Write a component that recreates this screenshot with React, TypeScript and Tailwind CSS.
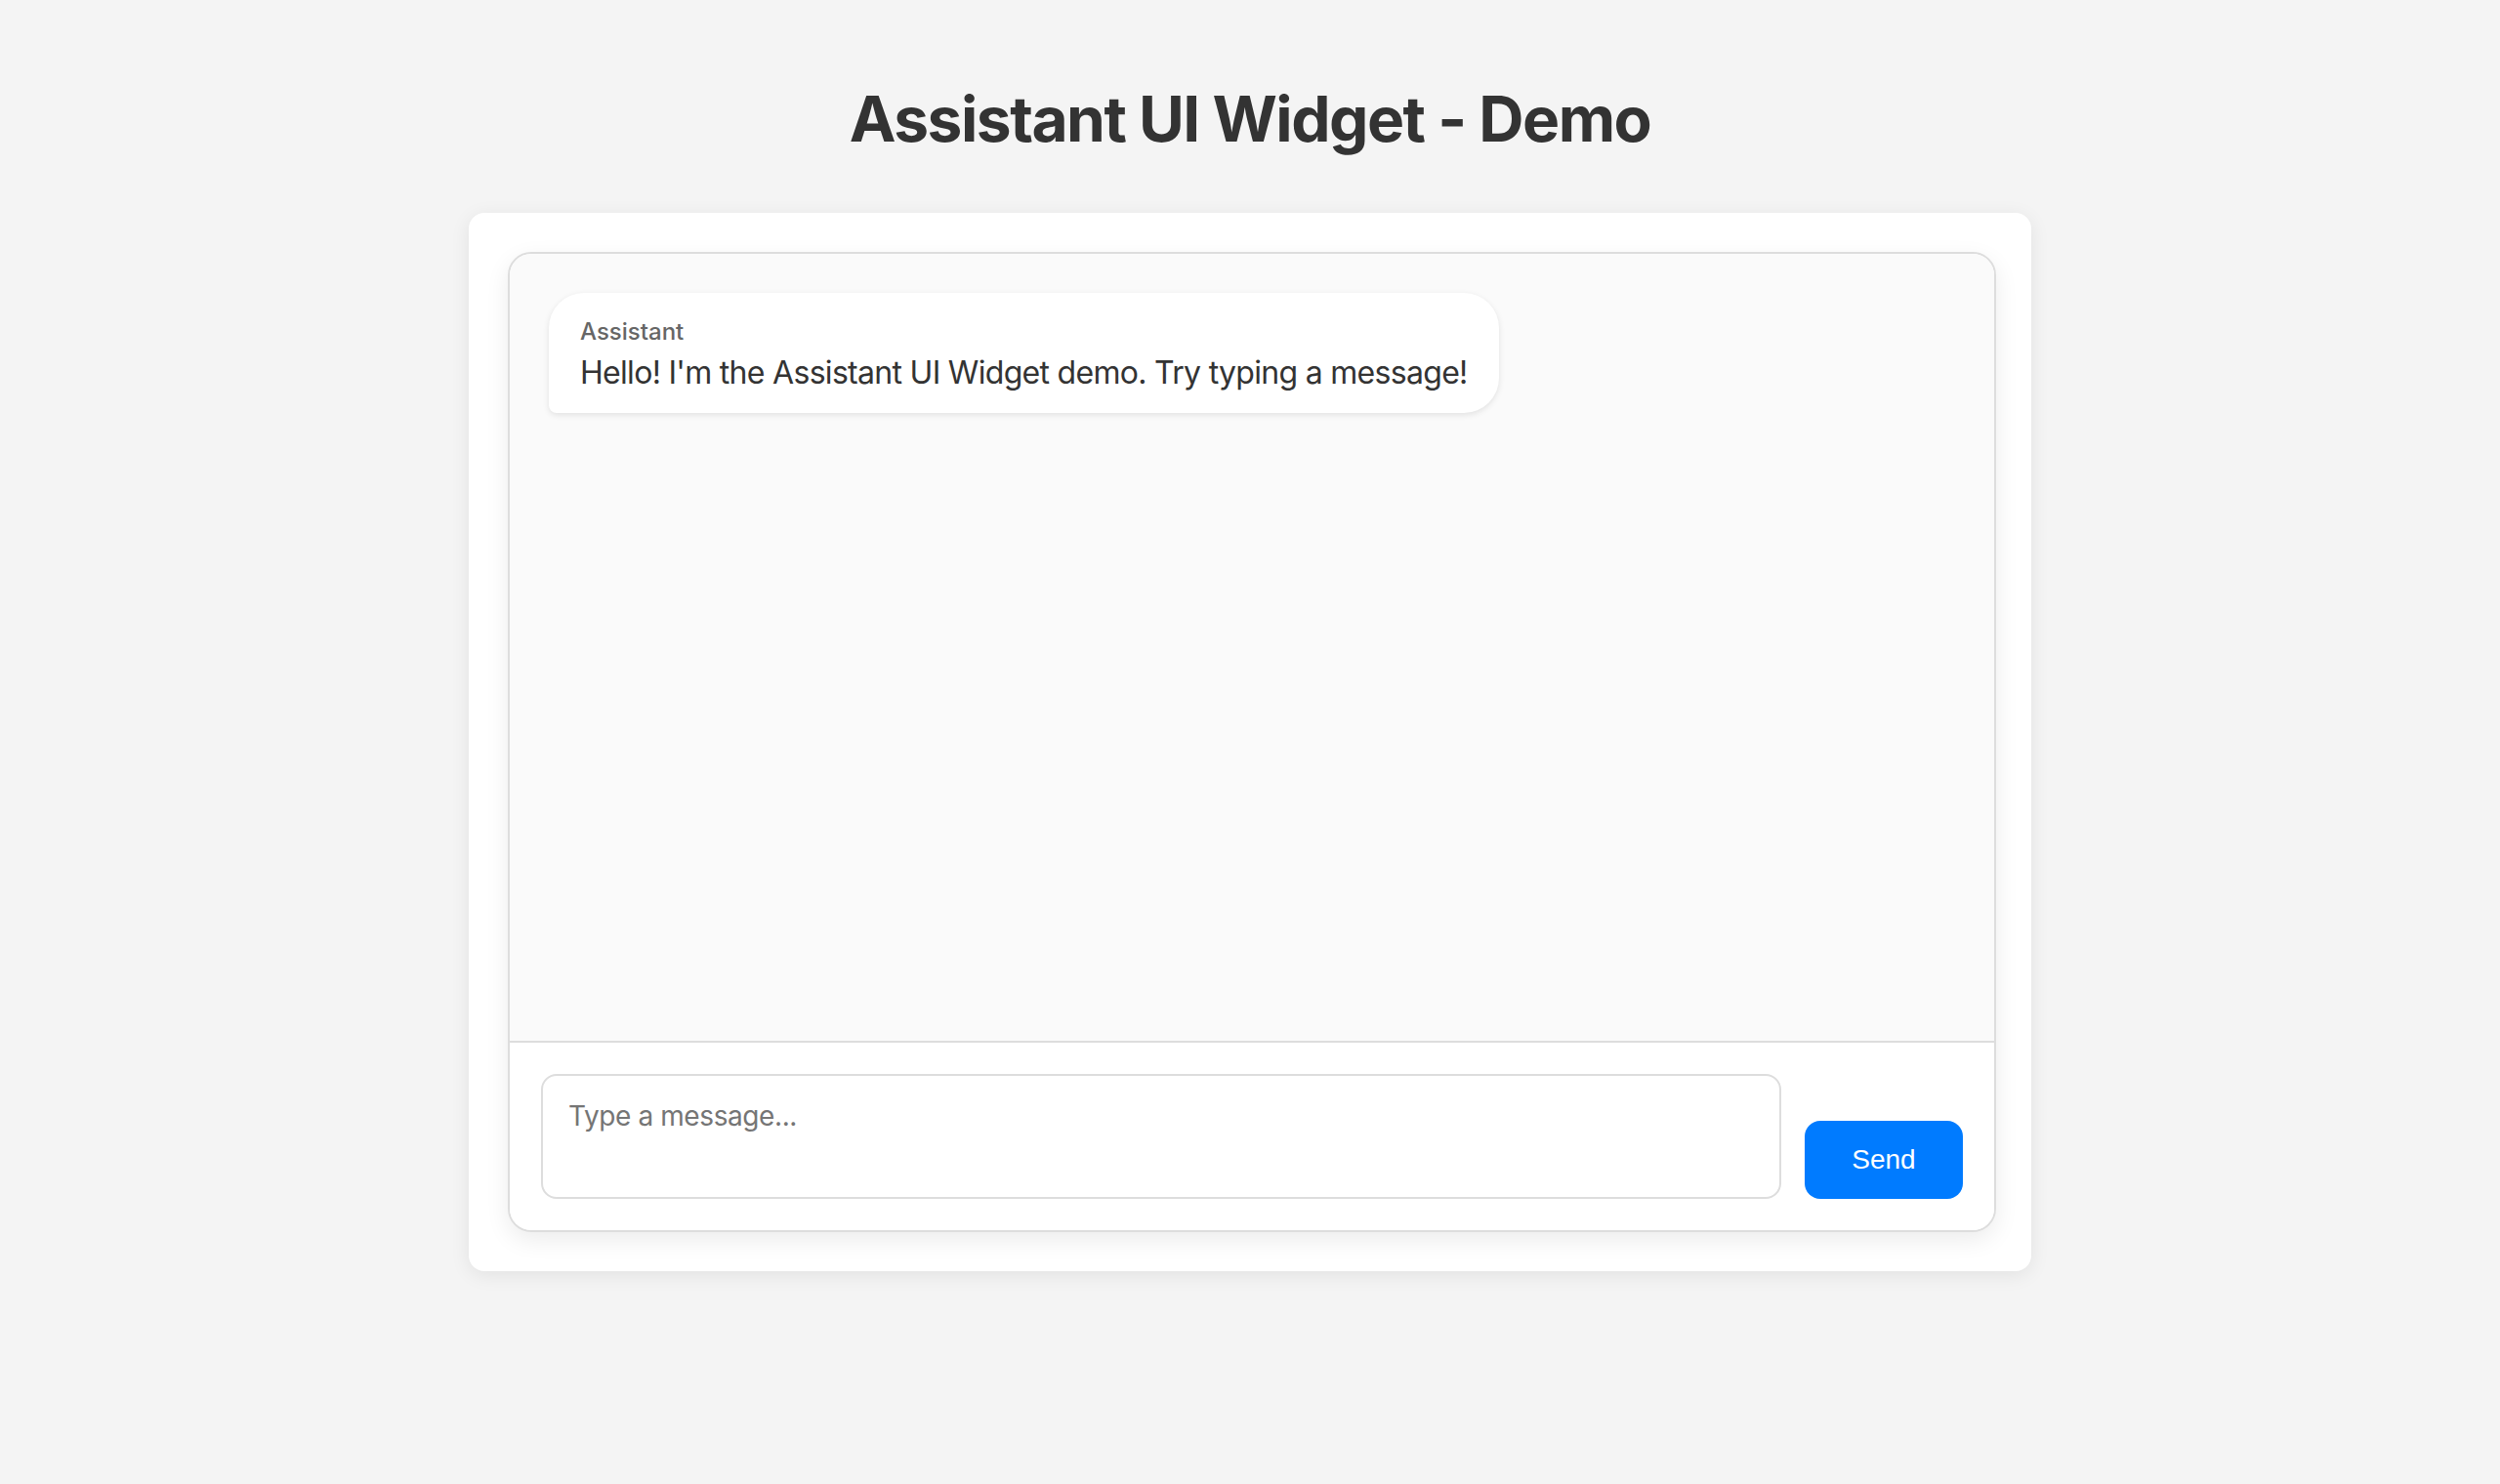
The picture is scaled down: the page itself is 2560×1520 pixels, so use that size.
export default function App() {
  return (
    <div className="min-h-[1520px] w-full bg-[#f4f4f4] pt-[83px] font-['Inter',sans-serif] text-[#333]">
      <h1 className="text-center text-[64px] font-bold leading-[77px] tracking-[-1.5px] text-[#333]">
        Assistant UI Widget - Demo
      </h1>

      {/* Demo card */}
      <div className="mx-auto mt-[58px] w-[1600px] rounded-[16px] bg-white p-[40px] shadow-[0_4px_20px_rgba(0,0,0,0.08)]">
        {/* Widget */}
        <div className="flex h-[1004px] w-[1524px] flex-col overflow-hidden rounded-[24px] border-2 border-[#ddd] bg-white shadow-[0_8px_24px_rgba(0,0,0,0.08)]">
          <div className="flex flex-1 flex-col items-start bg-[#fafafa] p-[40px]">
            <div className="rounded-[36px] rounded-bl-[8px] bg-white px-[32px] pb-[22px] pt-[26px] shadow-[0_2px_6px_rgba(0,0,0,0.1)]">
              <div className="mb-[8px] text-[24px] font-medium leading-[28px] text-[#666]">Assistant</div>
              <div className="text-[32px] leading-[39px] tracking-[-0.7px] text-[#333]">
                Hello! I'm the Assistant UI Widget demo. Try typing a message!
              </div>
            </div>
          </div>

          <div className="flex items-end gap-[24px] border-t-2 border-[#ddd] bg-white p-[32px]">
            <textarea
              placeholder="Type a message..."
              className="h-[128px] flex-1 resize-none rounded-[16px] border-2 border-[#ddd] bg-white px-[26px] pb-[20px] pt-[24px] font-['Inter',sans-serif] text-[28px] leading-[34px] tracking-[-0.4px] text-[#333] outline-none placeholder:text-[#757575]"
            />
            <button className="h-[80px] w-[162px] rounded-[16px] bg-[#007bff] font-['Liberation_Sans',Arial,sans-serif] text-[28px] text-white">
              Send
            </button>
          </div>
        </div>
      </div>
    </div>
  );
}
